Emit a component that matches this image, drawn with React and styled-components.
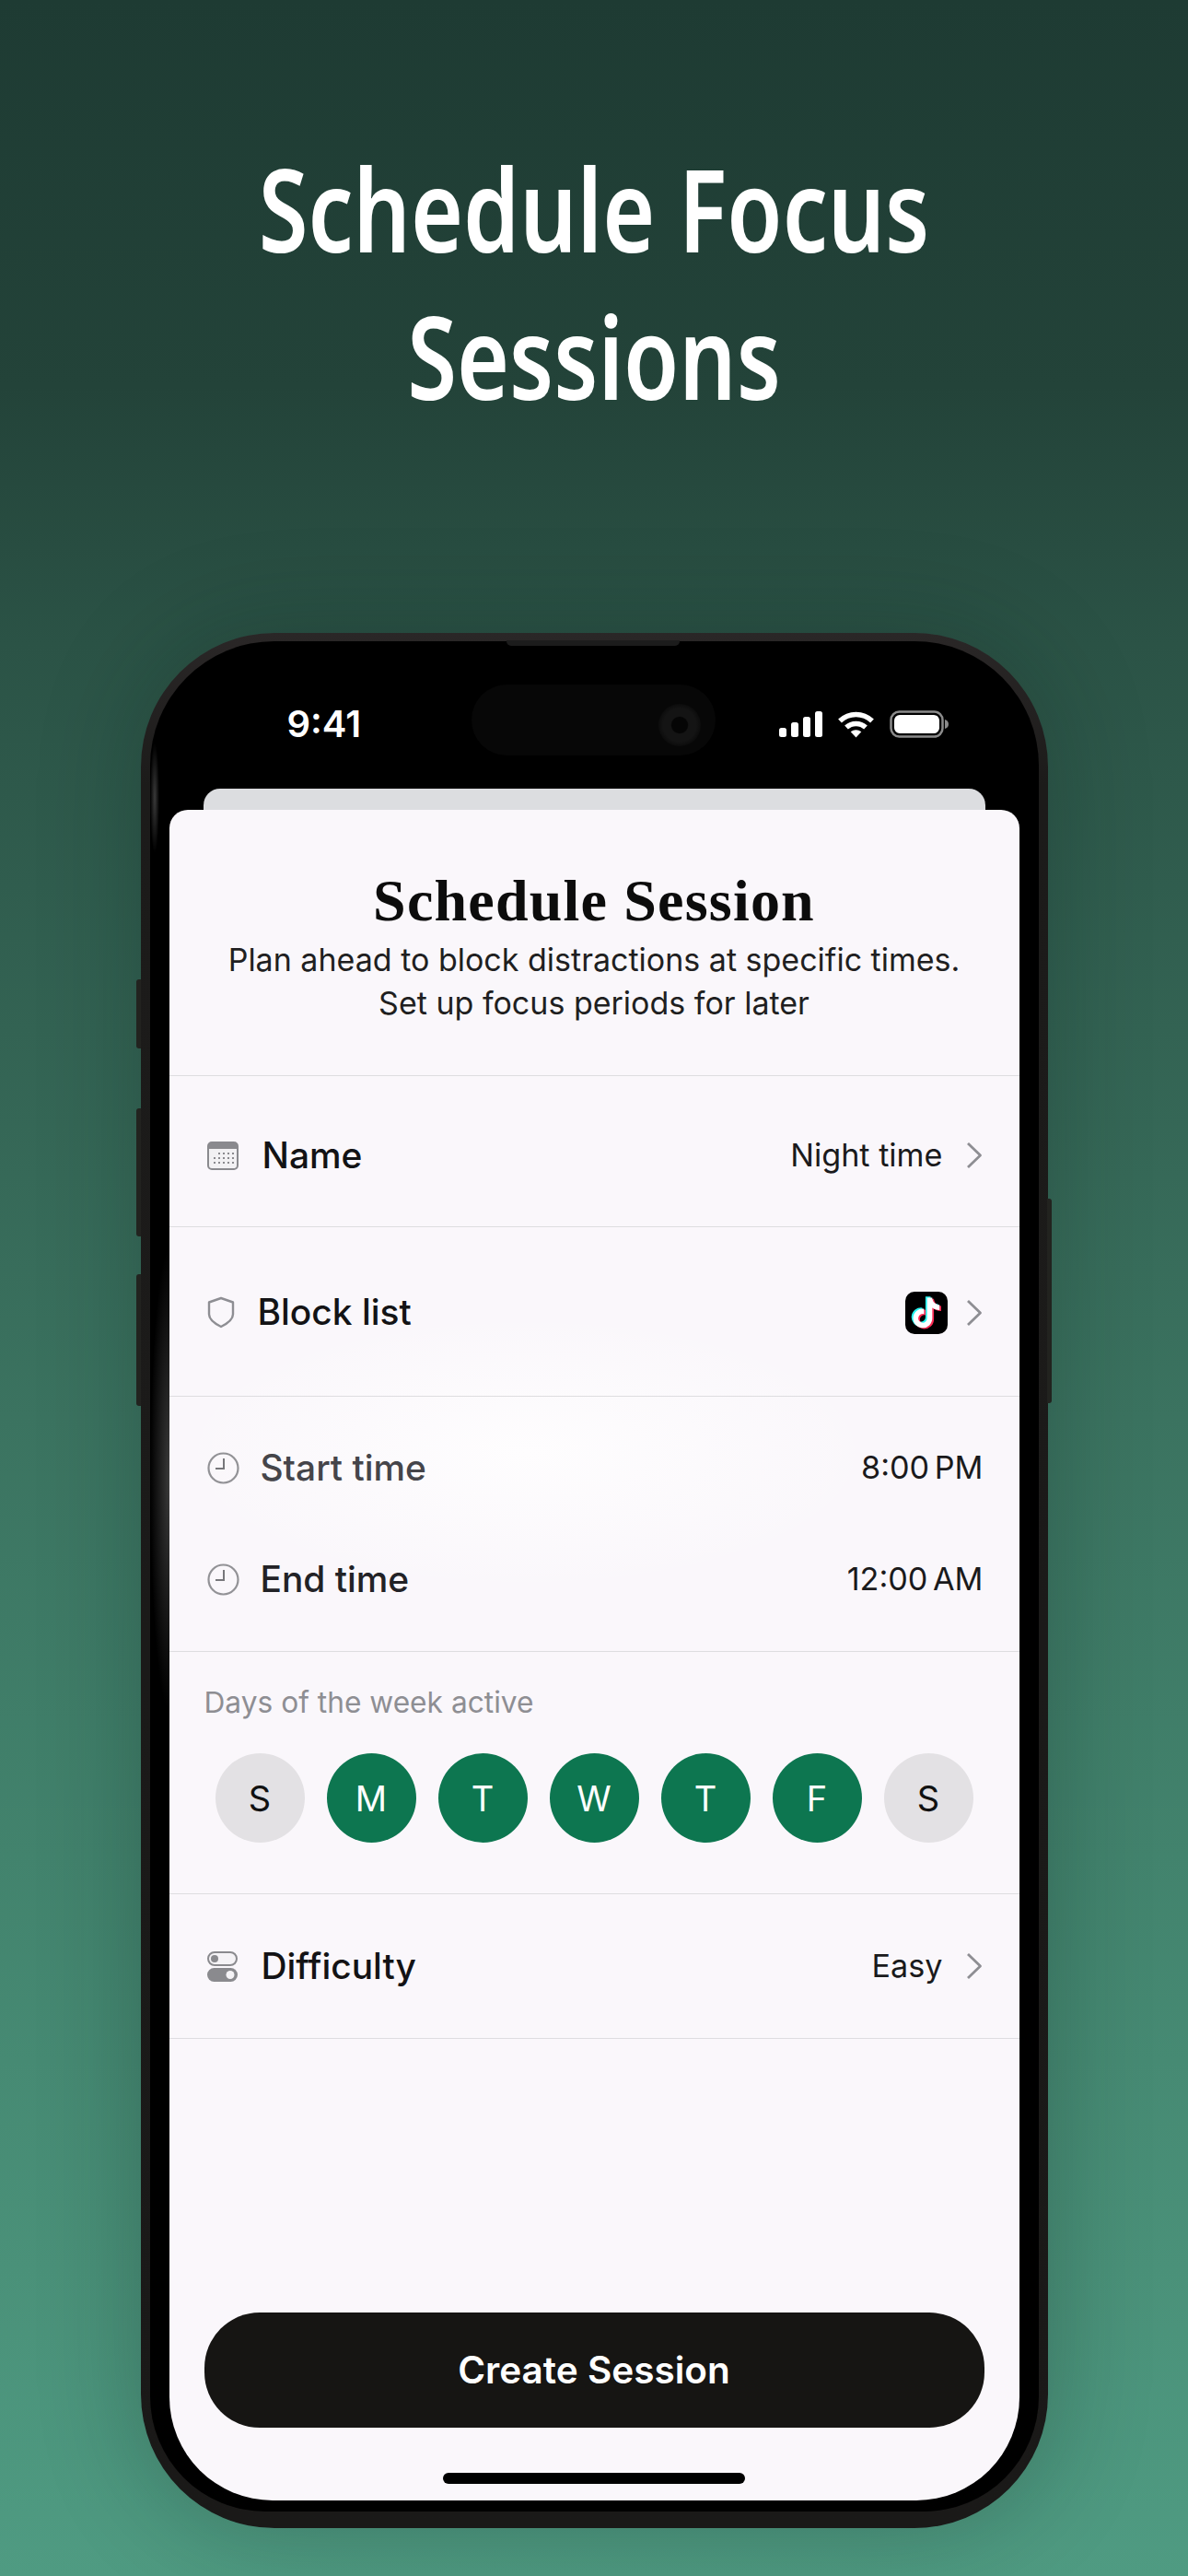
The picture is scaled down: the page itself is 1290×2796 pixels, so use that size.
import React from "react";
import styled, { createGlobalStyle } from "styled-components";

const GlobalStyle = createGlobalStyle`
  html, body {
    margin: 0;
    padding: 0;
    background: #1f3d35;
  }
  * {
    box-sizing: border-box;
  }
`;

const Page = styled.div`
  width: 1290px;
  height: 2796px;
  overflow: hidden;
  display: flex;
  flex-direction: column;
  align-items: center;
  background: linear-gradient(180deg, #1e3b33 0%, #234339 15%, #2b5346 25%, #336353 40%, #3b7360 55%, #42836d 72%, #4a9179 88%, #4f9b82 100%);
  font-family: Inter, "Noto Sans", sans-serif;
`;

const Headline = styled.h1`
  margin: 0;
  padding-top: 146px;
  width: 100%;
  height: 687px;
  flex: none;
  text-align: center;
  font-family: "Noto Sans", sans-serif;
  font-weight: 650;
  font-size: 124px;
  line-height: 160px;
  color: #ffffff;
  transform: scaleX(0.788);
`;

const Phone = styled.div`
  position: relative;
  width: 985px;
  height: 2057px;
  flex: none;
  padding: 9px 10px 18px;
  border-radius: 145px;
  background: linear-gradient(180deg, #2a2727 0%, #1c1b1a 8%, #1a1918 100%);
  box-shadow: 0 0 110px rgba(10, 30, 25, 0.28);
`;

const SideButton = styled.span`
  position: absolute;
  top: ${(p) => p.$top}px;
  height: ${(p) => p.$height}px;
  width: 5px;
  background: #22231f;
  ${(p) => (p.$right ? "right: -4px; border-radius: 0 3px 3px 0;" : "left: -5px; border-radius: 3px 0 0 3px;")}
`;

const Speaker = styled.span`
  position: absolute;
  top: 8px;
  left: 397px;
  width: 188px;
  height: 6px;
  border-radius: 0 0 5px 5px;
  background: #1c1c1c;
`;

const Bezel = styled.div`
  height: 100%;
  padding: 0 21px 12px;
  display: flex;
  flex-direction: column;
  border-radius: 135px 135px 125px 125px;
  overflow: hidden;
  background:
    radial-gradient(ellipse 21px 250px at 21px 910px, #3a3a3a 0%, rgba(58, 58, 58, 0) 100%),
    radial-gradient(ellipse 5px 60px at 5px 170px, #3a3a3a 0%, rgba(58, 58, 58, 0) 100%),
    #000000;
`;

const StatusBar = styled.div`
  height: 160px;
  flex: none;
  position: relative;
  display: flex;
  align-items: center;
  justify-content: space-between;
  padding: 20px 77px 0 128px;
  color: #ffffff;
`;

const Clock = styled.span`
  font-family: Inter, sans-serif;
  font-weight: 600;
  font-size: 40px;
  line-height: 1;
`;

const Island = styled.div`
  position: absolute;
  left: 328px;
  top: 47px;
  width: 265px;
  height: 77px;
  border-radius: 39px;
  background: #070707;
`;

const Lens = styled.span`
  position: absolute;
  right: 16px;
  top: 21px;
  width: 46px;
  height: 46px;
  border-radius: 50%;
  background: radial-gradient(circle, #050505 0 26%, #141414 30% 55%, #0c0c0c 70%, #070707 100%);
`;

const StatusIcons = styled.div`
  display: flex;
  align-items: center;
  gap: 16px;
`;

const BackCard = styled.div`
  height: 23px;
  flex: none;
  margin: 0 37px;
  border-radius: 18px 18px 0 0;
  background: #dcdde0;
`;

const Sheet = styled.div`
  flex: 1;
  display: flex;
  flex-direction: column;
  border-radius: 20px 20px 112px 112px;
  background:
    radial-gradient(ellipse 380px 150px at 42% 38%, #fefdfe 0%, rgba(254, 253, 254, 0) 100%),
    #faf7fb;
`;

const Section = styled.section`
  height: ${(p) => p.$height}px;
  flex: none;
  border-bottom: 1px solid #dedde0;
`;

const Header = styled(Section)`
  padding-top: 64px;
  text-align: center;
`;

const SheetTitle = styled.h2`
  margin: 0 0 5px;
  font-family: "Liberation Serif", serif;
  font-weight: 700;
  font-size: 64px;
  line-height: 70px;
  letter-spacing: 1.2px;
  color: #0c0c0c;
`;

const SheetSub = styled.p`
  margin: 0;
  font-size: 34px;
  line-height: 47px;
  color: #1f1f21;
`;

const Row = styled.div`
  height: ${(p) => p.$height || 121}px;
  display: flex;
  align-items: center;
  padding: ${(p) => p.$nudge || 0}px 39px 0 41px;
`;

const RowIcon = styled.span`
  width: ${(p) => p.$width}px;
  display: flex;
  flex: none;
`;

const Label = styled.span`
  flex: 1;
  font-weight: 550;
  font-size: 38.9px;
  line-height: 1;
  color: ${(p) => p.$color || "#131315"};
`;

const Value = styled.span`
  display: flex;
  align-items: center;
  gap: ${(p) => p.$gap || 26}px;
  font-size: 34.2px;
  line-height: 1;
  color: #1a1a1c;
`;

const TimeGap = styled.span`
  margin-left: -4px;
`;

const Times = styled(Section)`
  display: flex;
  flex-direction: column;
  justify-content: center;
`;

const DaysSection = styled(Section)`
  padding: 35px 39px 0 38px;
`;

const DaysLabel = styled.div`
  font-size: 31.7px;
  line-height: 40px;
  color: #8e8e93;
`;

const Days = styled.div`
  display: flex;
  justify-content: space-between;
  margin: 35px 11px 0 12px;
`;

const Day = styled.span`
  width: 97px;
  height: 97px;
  border-radius: 50%;
  display: flex;
  align-items: center;
  justify-content: center;
  font-size: 38px;
  background: ${(p) => (p.$on ? "#0d7650" : "#e3e1e4")};
  color: ${(p) => (p.$on ? "#ffffff" : "#111111")};
`;

const Footer = styled.div`
  flex: 1;
  display: flex;
  flex-direction: column;
  align-items: center;
  justify-content: flex-end;
  padding: 0 38px 18px;
`;

const CreateButton = styled.button`
  width: 100%;
  height: 125px;
  border: 0;
  border-radius: 60px;
  background: #161513;
  color: #ffffff;
  font-family: Inter, sans-serif;
  font-weight: 600;
  font-size: 40.5px;
`;

const HomeBar = styled.span`
  width: 328px;
  height: 12px;
  margin-top: 49px;
  border-radius: 6px;
  background: #000000;
`;

const Chevron = () => (
  <svg width="18" height="30" viewBox="0 0 18 30" fill="none">
    <path d="M1 2l13.500 13L1 28" stroke="#8e8e93" strokeWidth="2.800" strokeLinejoin="round" />
  </svg>
);

const CalendarIcon = () => (
  <svg width="34" height="31" viewBox="0 0 34 31">
    <rect x="1" y="1" width="32" height="29" rx="4" fill="#f2f1f3" stroke="#8a8a8e" strokeWidth="2" />
    <path d="M1 8V5a4 4 0 014-4h24a4 4 0 014 4v3z" fill="#8a8a8e" />
    {[12, 17, 22].map((y) =>
      [8, 13, 18, 23, 28].map((x) =>
        y === 12 && x < 13 ? null : <rect key={`${x}-${y}`} x={x - 1} y={y} width="2" height="2" fill="#8a8a8e" />
      )
    )}
  </svg>
);

const ShieldIcon = () => (
  <svg width="30" height="35" viewBox="0 0 30 35" fill="none">
    <path
      d="M15 2l13 4.500v13c0 6-6 10-13 13.500C8 29.500 2 25.500 2 19.500v-13z"
      stroke="#8e8e93"
      strokeWidth="2.400"
      strokeLinejoin="round"
    />
  </svg>
);

const ClockIcon = () => (
  <svg width="35" height="35" viewBox="0 0 35 35" fill="none">
    <circle cx="17.500" cy="17.500" r="16" stroke="#929296" strokeWidth="2.200" />
    <path d="M18 7v11H9" stroke="#77777b" strokeWidth="2" />
  </svg>
);

const ToggleIcon = () => (
  <svg width="33" height="33" viewBox="0 0 33 33">
    <rect x="1" y="1" width="31" height="14" rx="7" fill="#f5f3f6" stroke="#8a8a8e" strokeWidth="2" />
    <circle cx="8" cy="8" r="4" fill="#8a8a8e" />
    <rect y="18" width="33" height="15" rx="7.500" fill="#8a8a8e" />
    <circle cx="25" cy="25.500" r="4.500" fill="#f5f3f6" />
  </svg>
);

const TIKTOK =
  "M448 209.91a210.06 210.06 0 0 1-122.77-39.25v178.72A162.55 162.55 0 1 1 185 188.31v89.89a74.62 74.62 0 1 0 52.23 71.18V0h88a121.18 121.18 0 0 0 1.86 22.17A122.18 122.18 0 0 0 381 102.39a121.43 121.43 0 0 0 67 20.14z";

const TikTokIcon = () => (
  <svg width="46" height="46" viewBox="0 0 46 46">
    <rect width="46" height="46" rx="10" fill="#000000" />
    <g transform="translate(8.500 6.500) scale(0.064)">
      <path d={TIKTOK} fill="#25f4ee" transform="translate(-28 -18)" />
      <path d={TIKTOK} fill="#fe2c55" transform="translate(28 18)" />
      <path d={TIKTOK} fill="#ffffff" />
    </g>
  </svg>
);

const SignalIcon = () => (
  <svg width="47" height="28" viewBox="0 0 47 28" fill="#ffffff">
    <rect x="0" y="18" width="8" height="10" rx="2.500" />
    <rect x="13" y="12" width="8" height="16" rx="2.500" />
    <rect x="26" y="6" width="8" height="22" rx="2.500" />
    <rect x="39" y="0" width="8" height="28" rx="2.500" />
  </svg>
);

const WifiIcon = () => (
  <svg width="41" height="29" viewBox="0 0 41 29" fill="none" stroke="#ffffff" strokeWidth="5.500">
    <path d="M3 10.500c10-9.500 25-9.500 35 0" />
    <path d="M10 17.500c6-5.500 15-5.500 21 0" />
    <path d="M20.500 28.500l-5.800-6.200c3.500-2.800 8-2.800 11.600 0z" fill="#ffffff" stroke="none" />
  </svg>
);

const BatteryIcon = () => (
  <svg width="64" height="30" viewBox="0 0 64 30" fill="none">
    <rect x="1.500" y="1.500" width="56" height="27" rx="9" stroke="#8b8b8b" strokeWidth="2.500" />
    <rect x="5" y="5" width="49" height="20" rx="6" fill="#ffffff" />
    <path d="M60 10c2.500.8 4 2.500 4 5s-1.500 4.200-4 5z" fill="#8b8b8b" />
  </svg>
);

const DAYS = [
  ["S", false],
  ["M", true],
  ["T", true],
  ["W", true],
  ["T", true],
  ["F", true],
  ["S", false],
];

export default function App() {
  return (
    <Page>
      <GlobalStyle />
      <Headline>
        Schedule Focus
        <br />
        Sessions
      </Headline>
      <Phone>
        <SideButton $top={376} $height={75} />
        <SideButton $top={516} $height={139} />
        <SideButton $top={696} $height={143} />
        <SideButton $right $top={614} $height={222} />
        <Speaker />
        <Bezel>
          <StatusBar>
            <Clock>9:41</Clock>
            <Island>
              <Lens />
            </Island>
            <StatusIcons>
              <SignalIcon />
              <WifiIcon />
              <BatteryIcon />
            </StatusIcons>
          </StatusBar>
          <BackCard />
          <Sheet>
            <Header as="header" $height={289}>
              <SheetTitle>Schedule Session</SheetTitle>
              <SheetSub>
                Plan ahead to block distractions at specific times.
                <br />
                Set up focus periods for later
              </SheetSub>
            </Header>
            <Section $height={164}>
              <Row $height={163} $nudge={9}>
                <RowIcon $width={60}>
                  <CalendarIcon />
                </RowIcon>
                <Label>Name</Label>
                <Value>
                  Night time
                  <Chevron />
                </Value>
              </Row>
            </Section>
            <Section $height={184}>
              <Row $height={183} $nudge={2}>
                <RowIcon $width={55}>
                  <ShieldIcon />
                </RowIcon>
                <Label>Block list</Label>
                <Value $gap={21}>
                  <TikTokIcon />
                  <Chevron />
                </Value>
              </Row>
            </Section>
            <Times $height={277}>
              <Row>
                <RowIcon $width={58}>
                  <ClockIcon />
                </RowIcon>
                <Label $color="#45454a">Start time</Label>
                <Value>
                  <span>
                    8:00 <TimeGap>PM</TimeGap>
                  </span>
                </Value>
              </Row>
              <Row>
                <RowIcon $width={58}>
                  <ClockIcon />
                </RowIcon>
                <Label $color="#222226">End time</Label>
                <Value>
                  <span>
                    12:00 <TimeGap>AM</TimeGap>
                  </span>
                </Value>
              </Row>
            </Times>
            <DaysSection $height={263}>
              <DaysLabel>Days of the week active</DaysLabel>
              <Days>
                {DAYS.map(([letter, on], i) => (
                  <Day key={i} $on={on}>
                    {letter}
                  </Day>
                ))}
              </Days>
            </DaysSection>
            <Section $height={157}>
              <Row $height={156}>
                <RowIcon $width={59}>
                  <ToggleIcon />
                </RowIcon>
                <Label>Difficulty</Label>
                <Value>
                  Easy
                  <Chevron />
                </Value>
              </Row>
            </Section>
            <Footer>
              <CreateButton>Create Session</CreateButton>
              <HomeBar />
            </Footer>
          </Sheet>
        </Bezel>
      </Phone>
    </Page>
  );
}
